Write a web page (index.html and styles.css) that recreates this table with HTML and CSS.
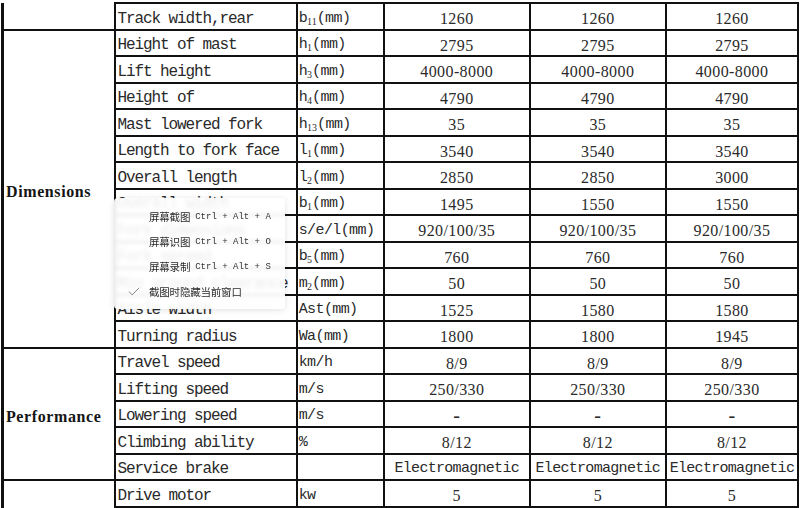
FILE: index.html
```html
<!DOCTYPE html>
<html>
<head>
<meta charset="utf-8">
<link rel="stylesheet" href="styles.css">
</head>
<body>
<div class="page">
<table class="spec">
  <colgroup>
    <col class="c-group"><col class="c-name"><col class="c-unit"><col class="c-val"><col class="c-val2"><col class="c-val3">
  </colgroup>
  <tbody>
    <tr><td class="grp cont"></td><td class="name">Track width,rear</td><td class="unit">b<sub>11</sub>(mm)</td><td class="val">1260</td><td class="val">1260</td><td class="val">1260</td></tr>
    <tr><td class="grp" rowspan="12">Dimensions</td><td class="name">Height of mast</td><td class="unit">h<sub>1</sub>(mm)</td><td class="val">2795</td><td class="val">2795</td><td class="val">2795</td></tr>
    <tr><td class="name">Lift height</td><td class="unit">h<sub>3</sub>(mm)</td><td class="val">4000-8000</td><td class="val">4000-8000</td><td class="val">4000-8000</td></tr>
    <tr><td class="name">Height of</td><td class="unit">h<sub>4</sub>(mm)</td><td class="val">4790</td><td class="val">4790</td><td class="val">4790</td></tr>
    <tr><td class="name">Mast lowered fork</td><td class="unit">h<sub>13</sub>(mm)</td><td class="val">35</td><td class="val">35</td><td class="val">35</td></tr>
    <tr><td class="name">Length to fork face</td><td class="unit">l<sub>1</sub>(mm)</td><td class="val">3540</td><td class="val">3540</td><td class="val">3540</td></tr>
    <tr><td class="name">Overall length</td><td class="unit">l<sub>2</sub>(mm)</td><td class="val">2850</td><td class="val">2850</td><td class="val">3000</td></tr>
    <tr><td class="name">Overall width</td><td class="unit">b<sub>1</sub>(mm)</td><td class="val">1495</td><td class="val">1550</td><td class="val">1550</td></tr>
    <tr><td class="name">Fork dimensions</td><td class="unit">s/e/l(mm)</td><td class="val">920/100/35</td><td class="val">920/100/35</td><td class="val">920/100/35</td></tr>
    <tr><td class="name">Fork spread</td><td class="unit">b<sub>5</sub>(mm)</td><td class="val">760</td><td class="val">760</td><td class="val">760</td></tr>
    <tr><td class="name">Min ground clearance</td><td class="unit">m<sub>2</sub>(mm)</td><td class="val">50</td><td class="val">50</td><td class="val">50</td></tr>
    <tr><td class="name">Aisle width</td><td class="unit">Ast(mm)</td><td class="val">1525</td><td class="val">1580</td><td class="val">1580</td></tr>
    <tr><td class="name">Turning radius</td><td class="unit">Wa(mm)</td><td class="val">1800</td><td class="val">1800</td><td class="val">1945</td></tr>
    <tr><td class="grp" rowspan="5">Performance</td><td class="name">Travel speed</td><td class="unit">km/h</td><td class="val">8/9</td><td class="val">8/9</td><td class="val">8/9</td></tr>
    <tr><td class="name">Lifting speed</td><td class="unit">m/s</td><td class="val">250/330</td><td class="val">250/330</td><td class="val">250/330</td></tr>
    <tr><td class="name">Lowering speed</td><td class="unit">m/s</td><td class="val dash">-</td><td class="val dash">-</td><td class="val dash">-</td></tr>
    <tr><td class="name">Climbing ability</td><td class="unit">%</td><td class="val">8/12</td><td class="val">8/12</td><td class="val">8/12</td></tr>
    <tr><td class="name">Service brake</td><td class="unit"></td><td class="val word">Electromagnetic</td><td class="val word">Electromagnetic</td><td class="val word">Electromagnetic</td></tr>
    <tr><td class="grp" rowspan="2"></td><td class="name">Drive motor</td><td class="unit">kw</td><td class="val">5</td><td class="val">5</td><td class="val">5</td></tr>
    <tr class="hidden-row"><td class="name"></td><td class="unit"></td><td class="val"></td><td class="val"></td><td class="val"></td></tr>
  </tbody>
</table>

<div class="menu">
  <div class="item"><span class="mark"></span><span class="label">屏幕截图</span><span class="key">Ctrl + Alt + A</span></div>
  <div class="item"><span class="mark"></span><span class="label">屏幕识图</span><span class="key">Ctrl + Alt + O</span></div>
  <div class="item"><span class="mark"></span><span class="label">屏幕录制</span><span class="key">Ctrl + Alt + S</span></div>
  <div class="item"><span class="mark"><svg width="12" height="9" viewBox="0 0 12 9"><path d="M0.8 4.6 L4.2 7.8 L11.2 0.8" fill="none" stroke="#888" stroke-width="1"/></svg></span><span class="label">截图时隐藏当前窗口</span></div>
</div>
</div>
</body>
</html>
```

FILE: styles.css
```css
html, body {
  margin: 0;
  padding: 0;
  background: #fff;
  overflow: hidden;
}

.page {
  position: relative;
  width: 800px;
  height: 508px;
  overflow: hidden;
  padding-top: 2px;
  box-sizing: border-box;
}

.spec {
  border-collapse: collapse;
  table-layout: fixed;
  width: 798px;
  margin-left: 1px;
  font-family: "Liberation Mono", monospace;
  color: #1e1e1e;
}

.c-group { width: 112px; }
.c-name { width: 182px; }
.c-unit { width: 87px; }
.c-val { width: 146px; }
.c-val2 { width: 136px; }
.c-val3 { width: 132px; }

.spec tr {
  height: 26.5px;
}

.spec td {
  border: 2px solid #111;
  padding: 0;
  white-space: nowrap;
  overflow: hidden;
  vertical-align: middle;
  line-height: 18px;
}

.spec td.grp {
  border-left: 3px solid #111;
  font-family: "Liberation Serif", serif;
  font-weight: bold;
  font-size: 16px;
  letter-spacing: 0.6px;
  padding-left: 2px;
  padding-top: 6px;
  text-align: left;
  color: #151515;
}

.spec td.grp.cont {
  border-top: none;
}

.spec td.name {
  font-size: 16px;
  letter-spacing: -1.1px;
  padding-left: 2px;
  padding-top: 5px;
  color: #2a2a2a;
}

.spec td.unit {
  font-size: 15px;
  letter-spacing: -0.6px;
  padding-left: 1px;
  padding-top: 5px;
  color: #2a2a2a;
}

.spec td.unit sub {
  font-family: "Liberation Serif", serif;
  font-size: 10px;
  letter-spacing: 0;
  vertical-align: -3px;
  line-height: 0;
}

.spec td.val {
  font-family: "Liberation Serif", serif;
  font-size: 16px;
  letter-spacing: 0.4px;
  text-align: center;
  padding-top: 6px;
  color: #2a2a2a;
}

.spec td.val.dash {
  font-size: 20px;
  padding-top: 2px;
}

.spec td.val.word {
  font-family: "Liberation Mono", monospace;
  font-size: 15px;
  letter-spacing: -0.7px;
  padding-top: 5px;
}

.menu {
  position: absolute;
  left: 114px;
  top: 198px;
  width: 171px;
  height: 111px;
  box-sizing: border-box;
  padding-top: 6px;
  border-radius: 4px;
  background: rgba(255, 255, 255, 0.9);
  backdrop-filter: blur(2px);
  box-shadow: 0 1px 6px rgba(0, 0, 0, 0.12);
  font-family: "Noto Sans CJK SC", sans-serif;
  color: #2b2b2b;
}

.item {
  display: flex;
  align-items: center;
  height: 25px;
}

.mark {
  width: 35px;
  display: flex;
  justify-content: flex-start;
  padding-left: 14px;
  box-sizing: border-box;
}

.label {
  font-size: 10.5px;
  letter-spacing: -0.2px;
}

.key {
  margin-left: 5px;
  font-family: "Liberation Mono", monospace;
  font-size: 9px;
  color: #333;
}
```
